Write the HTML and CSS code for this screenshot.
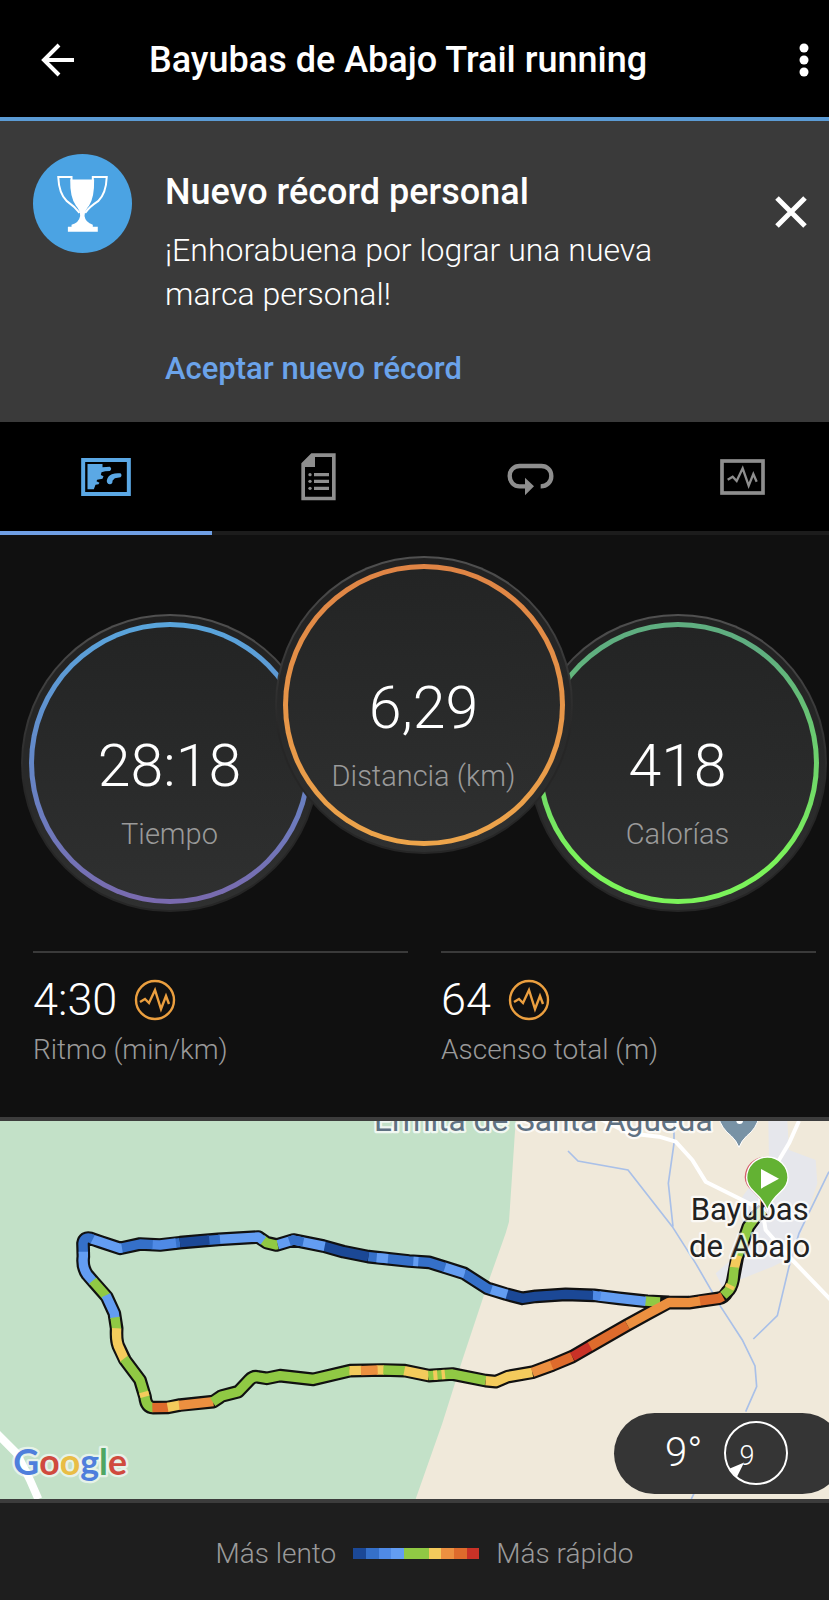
FILE: index.html
```html
<!DOCTYPE html>
<html lang="es">
<head>
    <meta charset="UTF-8">
    <meta name="viewport" content="width=device-width, initial-scale=1.0">
    <title>Bayubas de Abajo Trail running</title>
    <link rel="stylesheet" href="styles.css">
</head>
<body>

<div class="screen">
    <!-- Top bar -->
    <header class="topbar">
        <button class="icon-button" aria-label="Volver">
            <svg width="34" height="34" viewBox="0 0 34 34" fill="none" stroke="#fff" stroke-width="4"><path d="M33 17H3M18 2L3 17l15 15"/></svg>
        </button>
        <h1>Bayubas de Abajo Trail running</h1>
        <button class="icon-button" aria-label="Más opciones">
            <svg width="10" height="34" viewBox="0 0 10 34" fill="#fff"><circle cx="5" cy="5" r="4.5"/><circle cx="5" cy="17" r="4.5"/><circle cx="5" cy="29" r="4.5"/></svg>
        </button>
    </header>

    <!-- Personal record banner -->
    <section class="banner">
        <svg class="trophy" viewBox="38 39 298 298">
            <circle cx="187" cy="188" r="149" fill="#4ba3e3"/>
            <path d="M150 116H222Q223 170 207 194Q193 210 193 226Q196 246 218 252V258H233V273H143V258H154V252Q176 247 180 226Q181 210 167 194Q149 170 150 116Z" fill="#fff"/>
            <path d="M154 118V108H114Q116 158 140 181Q164 198 178 216M218 118V108H260Q258 158 234 181Q208 198 195 216" fill="none" stroke="#fff" stroke-width="6"/>
        </svg>
        <div class="banner-text">
            <h2>Nuevo récord personal</h2>
            <p>¡Enhorabuena por lograr una nueva marca personal!</p>
            <a href="#">Aceptar nuevo récord</a>
        </div>
        <button class="icon-button banner-close" aria-label="Cerrar">
            <svg width="32" height="32" viewBox="0 0 32 32" stroke="#fff" stroke-width="5"><path d="M2 2l28 28M30 2L2 30"/></svg>
        </button>
    </section>

    <!-- Tabs -->
    <nav class="tabs">
        <button class="tab active" aria-label="Mapa">
            <svg width="50" height="38" viewBox="66 54 149 114">
                <rect x="72" y="60" width="137" height="102" fill="none" stroke="#5ba8e5" stroke-width="12"/>
                <path d="M85 72H130V82L152 80Q160 86 152 93L138 94L127 97L125 105L133 109L130 116L114 119L112 124L121 128L118 133L109 134L104 148H85ZM184 100Q190 106 184 112L167 115L160 122Q161 132 152 133Q142 132 143 121Q146 108 158 103Q170 98 184 100Z" fill="#5ba8e5"/>
            </svg>
        </button>
        <button class="tab" aria-label="Estadísticas">
            <svg width="35" height="48" viewBox="33 39 105 144" fill="#8e8e8e">
                <path d="M64 40H137V181H34V70ZM75 51V81H45V170H126V51Z" fill-rule="evenodd"/>
                <path d="M72 99h45v10H72zM72 119h45v10H72zM72 140h45v10H72z"/>
                <circle cx="60" cy="104" r="5"/><circle cx="60" cy="124" r="5"/><circle cx="60" cy="145" r="5"/>
            </svg>
        </button>
        <button class="tab" aria-label="Vueltas">
            <svg width="47" height="39" viewBox="652 55 141 117">
                <path d="M753 143C772 143 785 130 785 112C785 94 772 82 755 82H690C673 82 660 94 660 112C660 130 673 143 690 143H708" fill="none" stroke="#8e8e8e" stroke-width="13"/>
                <path d="M706 117L733 143L706 170Z" fill="#8e8e8e"/>
            </svg>
        </button>
        <button class="tab" aria-label="Gráficas">
            <svg width="45" height="36" viewBox="62 56 135 108" fill="none" stroke="#8e8e8e">
                <rect x="68" y="62" width="123" height="96" stroke-width="11"/>
                <path d="M85 118L100 109L112 122L130 84L148 136L162 101L172 124" stroke-width="7"/>
            </svg>
        </button>
    </nav>

    <!-- Main figures -->
    <section class="dials">
        <div class="dial dial-time">
            <div class="dial-ring">
                <span class="dial-value">28:18</span>
                <span class="dial-label">Tiempo</span>
            </div>
        </div>
        <div class="dial dial-distance">
            <div class="dial-ring">
                <span class="dial-value">6,29</span>
                <span class="dial-label">Distancia (km)</span>
            </div>
        </div>
        <div class="dial dial-calories">
            <div class="dial-ring">
                <span class="dial-value">418</span>
                <span class="dial-label">Calorías</span>
            </div>
        </div>
    </section>

    <section class="stats">
        <div class="stat">
            <div class="stat-value">4:30
                <svg width="42" height="42" viewBox="0 0 42 42" fill="none" stroke="#eb9f3f"><circle cx="21" cy="21" r="19" stroke-width="2.4"/><path d="M6 23L11 20L15 24L21 11L27 30L32 17L35 25" stroke-width="2.4"/></svg>
            </div>
            <div class="stat-label">Ritmo (min/km)</div>
        </div>
        <div class="stat">
            <div class="stat-value">64
                <svg width="42" height="42" viewBox="0 0 42 42" fill="none" stroke="#eb9f3f"><circle cx="21" cy="21" r="19" stroke-width="2.4"/><path d="M6 23L11 20L15 24L21 11L27 30L32 17L35 25" stroke-width="2.4"/></svg>
            </div>
            <div class="stat-label">Ascenso total (m)</div>
        </div>
    </section>

    <!-- Route map -->
    <section class="map">
        <svg class="map-canvas" viewBox="0 33 2547 1134">
            <rect x="0" y="33" width="2547" height="1134" fill="#f0e9da"/>
            <path d="M0 33H1547L1527 335L1517 370L1467 510L1387 750L1327 940L1247 1167H0Z" fill="#c3e1c8"/>
            <path d="M2305 33H2362L2367 120L2447 150L2452 220L2417 330L2377 440L2317 470L2167 530L2147 490L2227 420L2227 260L2307 150Z" fill="#e6e7ec"/>

            <g class="streams">
                <path d="M1704 123L1734 153L1884 180L2017 350L2087 460L2162 590L2227 690L2265 768L2270 830L2237 905M2082 1150L2074 1167"/>
                <path d="M2022 33V100L2005 220L2019 350"/>
                <path d="M2487 185L2397 370L2367 470L2332 617L2260 687"/>
            </g>
            <g class="roads">
                <path d="M1787 20L1887 70L1977 80L2027 95L2077 150L2117 215L2227 270L2287 300L2297 360L2377 450L2497 575"/>
                <path d="M2397 33L2367 100L2337 150L2300 220"/>
                <path class="road-wide" d="M-10 970L50 1030L90 1110L115 1167"/>
            </g>

            <!-- Route: dark outline first, then one path for each pace section -->
            <g class="route">
                <g class="outline">
                    <path d="M2290 300L2267 320L2245 350L2228 400L2212 440L2199 510Q2194 535 2182 545Q2172 562 2157 565L2067 578L2007 577L1942 574L1857 565L1782 556L1697 553L1607 559L1567 565L1517 552L1462 535L1392 490L1335 472L1287 457L1227 453L1105 440L1030 425L970 408L880 390L830 405L800 398L775 381L655 388L540 398L480 405L420 402L360 415L300 395L272 385Q252 380 249 400L250 440Q246 472 262 494L280 515L320 560L343 610L350 655Q348 690 355 708L375 750L420 810L435 860Q438 892 460 893L505 892L540 885L640 875L665 858L715 845L748 810Q760 797 775 801L800 805L840 797L940 808L1050 782L1150 780L1215 782L1287 797L1357 792L1457 812L1487 815L1522 800L1597 787L1657 765L1717 740L1772 708L1882 645L1942 612L2007 577"/>
                </g>
                <path class="green" d="M2290 300L2267 320L2245 350L2228 400L2212 440"/>
                <path class="yellow" d="M2212 436L2203 475"/>
                <path class="green" d="M2203 472L2199 510Q2194 535 2182 545L2170 556"/>
                <path class="yellow" d="M2192 525L2187 535"/>
                <path class="deep-orange" d="M2168 559L2157 565L2097 573"/>
                <path class="green" d="M1980 576L1935 573"/>
                <path class="light" d="M1937 574L1857 565L1797 558"/>
                <path class="mid" d="M1802 559L1775 555"/>
                <path class="navy" d="M1779 556L1697 553L1607 559L1567 565L1517 552"/>
                <path class="light" d="M1521 553L1470 538"/>
                <path class="blue" d="M1474 539L1462 535L1392 490"/>
                <path class="light" d="M1394 491L1332 471"/>
                <path class="blue" d="M1335 472L1287 457L1227 453L1105 440"/>
                <path class="light" d="M1255 455L1240 454M1164 446L1130 443"/>
                <path class="navy" d="M1105 440L1030 425L972 409"/>
                <path class="light" d="M974 409L880 390L833 404"/>
                <path class="blue" d="M910 396L880 390L868 394"/>
                <path class="green" d="M833 404L828 405L800 398L785 387"/>
                <path class="light" d="M790 392L775 381L655 388"/>
                <path class="blue" d="M660 388L622 391M540 398L524 400"/>
                <path class="navy" d="M628 390L540 398"/>
                <path class="mid" d="M528 399L480 405L455 404"/>
                <path class="blue" d="M458 404L420 402L360 415"/>
                <path class="light" d="M366 414L360 415L300 395L275 387"/>
                <path class="blue" d="M278 388L272 385Q252 380 249 400L250 430"/>
                <path class="light" d="M250 425V440Q246 472 262 494L280 515"/>
                <path class="green" d="M278 512L290 526L320 560"/>
                <path class="light" d="M318 556L343 610L345 625"/>
                <path class="green" d="M345 622L350 658"/>
                <path class="yellow" d="M350 655Q348 690 355 708L375 752"/>
                <path class="green" d="M372 746L375 750L420 810L435 860Q438 892 460 893"/>
                <path class="yellow" d="M431 846L435 860"/>
                <path class="deep-orange" d="M457 893L507 892"/>
                <path class="yellow" d="M503 892L540 885"/>
                <path class="orange" d="M537 886L640 875"/>
                <path class="green" d="M638 876L665 858L715 845L748 810Q760 797 775 801L800 805L840 797L940 808L1050 782"/>
                <path class="yellow" d="M1048 782L1085 781M1130 780L1152 780"/>
                <path class="orange" d="M1083 782L1133 780"/>
                <path class="green" d="M1150 780L1215 782"/>
                <path class="yellow" d="M1213 782L1287 797"/>
                <path class="green" d="M1285 797L1357 792L1457 812"/>
                <path class="yellow" d="M1300 796L1312 795M1325 794L1335 793"/>
                <path class="yellow" d="M1457 812L1487 815L1522 800L1597 787"/>
                <path class="orange" d="M1597 787L1657 765"/>
                <path class="deep-orange" d="M1655 766L1717 740"/>
                <path class="red" d="M1717 740L1772 708"/>
                <path class="deep-orange" d="M1770 709L1882 645"/>
                <path class="orange" d="M1882 645L1942 612L2007 577L2067 578L2100 573"/>
            </g>

            <!-- Place labels -->
            <path d="M2155 20H2277Q2270 55 2240 78Q2226 90 2217 112Q2208 90 2194 78Q2164 55 2155 20Z" fill="#7892a5" stroke="#fff" stroke-width="3"/>
            <circle cx="2219" cy="32" r="10" fill="#fff"/>
            <g class="place">
                <text class="poi" x="1630" y="62">Ermita de Santa Águeda</text>
                <text x="2249" y="330">Bayubas</text>
                <text x="2249" y="440">de Abajo</text>
            </g>

            <!-- Start pin -->
            <path d="M2299 300Q2289 272 2259 245Q2234 225 2234 202A62 62 0 0 1 2358 202Q2358 225 2336 245Q2306 272 2299 300Z" fill="#d4606c"/>
            <path d="M2302 300Q2292 272 2262 245Q2240 225 2240 203A62 62 0 0 1 2364 203Q2364 225 2342 245Q2312 272 2302 300Z" fill="#63b233" stroke="#fff" stroke-width="4"/>
            <path d="M2283 177L2337 206L2283 236Z" fill="#fff"/>

            <text class="logo" x="40" y="1095"><tspan fill="#4f7fdc">G</tspan><tspan fill="#d04a3e">o</tspan><tspan fill="#e9bd45">o</tspan><tspan fill="#4f7fdc">g</tspan><tspan fill="#4fa663">l</tspan><tspan fill="#d04a3e">e</tspan></text>
        </svg>

        <div class="weather">
            <span class="temperature">9°</span>
            <svg class="wind" viewBox="938 924 200 200">
                <circle cx="1038" cy="1024" r="94" fill="none" stroke="#fff" stroke-width="6"/>
                <path d="M957 1072L1002 1053L980 1097Z" fill="#fff"/>
                <text x="1011" y="1061">9</text>
            </svg>
        </div>
    </section>

    <!-- Pace legend -->
    <footer class="legend">
        <span>Más lento</span>
        <div class="scale">
            <i class="navy"></i><i class="blue"></i><i class="mid"></i><i class="light"></i><i class="green"></i><i class="green"></i><i class="yellow"></i><i class="orange"></i><i class="deep-orange"></i><i class="red"></i>
        </div>
        <span>Más rápido</span>
    </footer>
</div>

</body>
</html>
```

FILE: styles.css
```css
/* General Reset */
* {
    box-sizing: border-box;
    margin: 0;
    padding: 0;
}

body {
    font-family: Roboto, "Liberation Sans", sans-serif;
    background-color: #1e1e1e;
    color: #fff;
    overflow-x: hidden;
}

/* The activity view runs a little past the right edge */
.screen {
    width: calc(100% + 20px);
}

button {
    background: none;
    border: 0;
    color: inherit;
    cursor: pointer;
}

svg {
    display: block;
}

/* Top bar */
.topbar {
    display: flex;
    align-items: center;
    height: 121px;
    padding: 2px 40px 0 41px;
    background-color: #000;
    border-bottom: 4px solid #5b9bd5;
}

.topbar h1 {
    flex: 1;
    margin-left: 74px;
    font-size: 36px;
    font-weight: 500;
}

/* Banner */
.banner {
    display: flex;
    align-items: flex-start;
    padding: 33px 42px 31px 33px;
    background-color: #3a3a3a;
}

.trophy {
    width: 99px;
    height: 99px;
    margin-right: 33px;
}

.banner-text {
    flex: 1;
}

.banner h2 {
    margin-top: 16px;
    font-size: 36px;
    line-height: 44px;
    font-weight: 500;
}

.banner p {
    max-width: 520px;
    margin-top: 14px;
    font-size: 32px;
    line-height: 44px;
    font-weight: 300;
}

.banner a {
    display: inline-block;
    margin-top: 31px;
    font-size: 31px;
    line-height: 44px;
    font-weight: 500;
    color: #6ba3ea;
    text-decoration: none;
}

.banner-close {
    margin-top: 42px;
}

/* Tabs */
.tabs {
    display: flex;
    background-color: #000;
}

.tab {
    display: flex;
    flex: 1;
    align-items: center;
    justify-content: center;
    height: 113px;
    border-bottom: 4px solid #1c1c1c;
}

.tab.active {
    border-bottom-color: #6f9fe4;
}

/* Dials */
.dials {
    display: flex;
    justify-content: center;
    align-items: flex-end;
    padding: 21px 2px 39px 0;
    background-color: #101010;
}

.dial {
    width: 298px;
    height: 298px;
    padding: 6px;
    border: 2px solid transparent;
    border-radius: 50%;
    background: linear-gradient(#212121, #2f3030) padding-box, linear-gradient(#505050, #262626 60%) border-box;
}

.dial-distance {
    z-index: 1;
    margin: 0 -44px 58px;
}

.dial-ring {
    display: flex;
    flex-direction: column;
    align-items: center;
    height: 100%;
    padding-top: 104px;
    border: 5px solid transparent;
    border-radius: 50%;
}

.dial-time .dial-ring {
    background: linear-gradient(#232424, #2f3030) padding-box, linear-gradient(#59a5dc, #6487c8 50%, #7a6aae) border-box;
}

.dial-distance .dial-ring {
    background: linear-gradient(#232424, #2f3030) padding-box, linear-gradient(#df8445, #eda54b) border-box;
}

.dial-calories .dial-ring {
    background: linear-gradient(#232424, #2f3030) padding-box, linear-gradient(#5fae80 10%, #7bf35a 85%) border-box;
}

.dial-value {
    font-size: 59px;
    line-height: 70px;
    font-weight: 300;
}

.dial-label {
    margin-top: 15px;
    font-size: 29px;
    line-height: 36px;
    font-weight: 300;
    color: #9a9a9a;
}

/* Stats */
.stats {
    display: flex;
    gap: 33px;
    padding: 0 33px 49px;
    background-color: #101010;
}

.stat {
    flex: 1;
    padding-top: 19px;
    border-top: 2px solid #3a3a3a;
}

.stat-value {
    display: flex;
    align-items: center;
    gap: 17px;
    font-size: 45px;
    line-height: 56px;
    font-weight: 300;
}

.stat-label {
    margin-top: 4px;
    font-size: 28px;
    line-height: 36px;
    font-weight: 300;
    color: #9a9a9a;
}

/* Map */
.map {
    position: relative;
    border-top: 4px solid #3c3c3c;
    border-bottom: 4px solid #3c3c3c;
}

.map-canvas {
    width: 100%;
}

.streams {
    fill: none;
    stroke: #a9c0e8;
    stroke-width: 5;
}

.roads {
    fill: none;
    stroke: #fff;
    stroke-width: 12;
    stroke-linejoin: round;
}

.road-wide {
    stroke-width: 24;
}

.route {
    fill: none;
    stroke-width: 28;
    stroke-linejoin: round;
}

.outline {
    stroke: #111;
    stroke-width: 41;
}

.place text {
    font-size: 93px;
    text-anchor: middle;
    fill: #222;
    stroke: rgba(255, 255, 255, 0.75);
    stroke-width: 14;
    stroke-linejoin: round;
    paint-order: stroke;
}

.place .poi {
    font-size: 95px;
    fill: #5f7182;
}

.logo {
    font-family: Lato, sans-serif;
    font-size: 107px;
    font-weight: 700;
    stroke: rgba(255, 255, 255, 0.6);
    stroke-width: 14;
    stroke-linejoin: round;
    paint-order: stroke;
}

/* Weather pill over the map */
.weather {
    position: absolute;
    right: 6px;
    bottom: 5px;
    display: flex;
    align-items: center;
    gap: 21px;
    width: 229px;
    height: 81px;
    padding: 0 0 2px 51px;
    border-radius: 41px;
    background-color: #353535;
}

.temperature {
    font-size: 40px;
    font-weight: 300;
}

.wind {
    width: 66px;
    height: 66px;
}

.wind text {
    font-size: 82px;
    font-weight: 300;
    text-anchor: middle;
    fill: #fff;
}

/* Legend */
.legend {
    display: flex;
    align-items: center;
    justify-content: center;
    gap: 17px;
    height: 97px;
    padding-top: 4px;
    background-color: #1e1e1e;
    color: #9a9a9a;
    font-size: 28px;
    font-weight: 300;
}

.scale {
    display: flex;
    width: 126px;
    height: 11px;
}

.scale i {
    flex: 1;
}

/* Pace colours, shared by the route and the legend */
.navy { stroke: #1b4896; background-color: #1b4896; }
.blue { stroke: #3570c9; background-color: #3570c9; }
.mid { stroke: #4f8ae6; background-color: #4f8ae6; }
.light { stroke: #639df2; background-color: #639df2; }
.green { stroke: #90c944; background-color: #90c944; }
.yellow { stroke: #f4cb5c; background-color: #f4cb5c; }
.orange { stroke: #ec9040; background-color: #ec9040; }
.deep-orange { stroke: #de6b2c; background-color: #de6b2c; }
.red { stroke: #c93227; background-color: #c93227; }
```
